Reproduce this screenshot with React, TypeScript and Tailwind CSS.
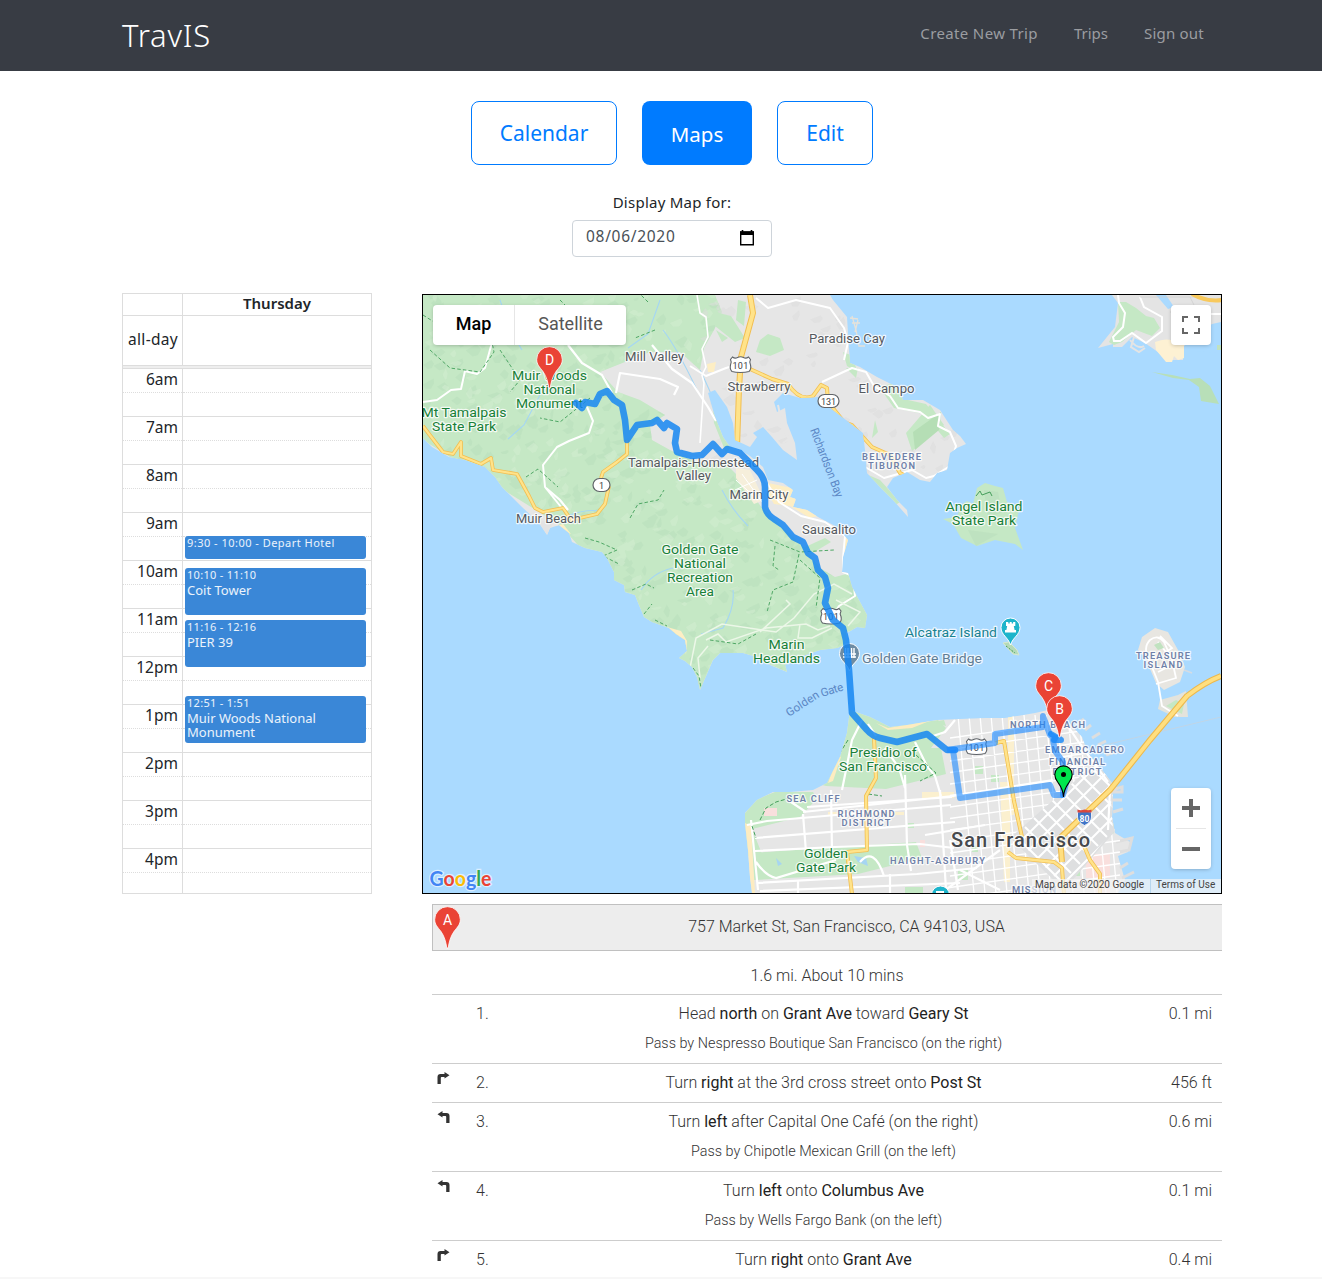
import React from "react";

const MAVEN = "font-['Noto_Sans',sans-serif]";

/* ---------- deterministic pseudo-random source for terrain shading ---------- */
function rng(seed: number) {
  let s = seed;
  return () => {
    s = (s * 16807) % 2147483647;
    return s / 2147483647;
  };
}

function terrain(seed: number, n: number, x0: number, y0: number, x1: number, y1: number) {
  const r = rng(seed);
  const out: string[] = [];
  for (let i = 0; i < n; i++) {
    const x = x0 + r() * (x1 - x0);
    const y = y0 + r() * (y1 - y0);
    const a = 3 + r() * 9;
    const b = 2 + r() * 5;
    const c = r() * 5;
    out.push(
      `M${x.toFixed(1)} ${y.toFixed(1)}l${a.toFixed(1)} ${(-b).toFixed(1)}l${c.toFixed(1)} ${(b * 0.8).toFixed(1)}l${(-a * 0.3).toFixed(1)} ${(b * 0.9).toFixed(1)}l${(-a * 0.5).toFixed(1)} ${(c * 0.3).toFixed(1)}z`
    );
  }
  return out.join("");
}

const MARIN =
  "M423 295L423 438L432 447L449 457L465 460L485 467L495 477L502 487L507 492L522 507L539 523L547 535L550 528L559 525L569 533L572 542L585 548L602 552L607 558L614 572L614 580L624 585L625 592L635 595L639 605L644 617L652 622L669 628L676 634L685 640L687 651L679 658L685 661L692 667L697 677L700 690L703 683L713 660L720 653L743 653L757 657L770 665L787 672L785 665L800 657L820 650L837 648L845 645L847 633L857 627L865 628L867 615L860 602L852 587L848 573L842 572L843 557L848 540L837 527L818 517L807 510L793 507L796 499L790 497L793 490L783 483L768 480L763 467L750 456L740 450L730 447L723 437L715 417L708 393L715 390L727 407L733 423L735 440L750 447L757 437L753 433L763 427L772 437L783 450L797 460L795 443L787 423L785 408L777 412L774 402L783 393L800 398L820 397L833 410L850 423L863 433L865 450L867 473L880 487L893 500L908 517L907 510L897 500L887 487L893 478L907 472L920 480L930 482L937 473L947 470L950 453L957 448L966 444L960 436L953 430L940 410L923 400L903 400L897 387L877 377L860 367L850 363L848 333L847 317L833 300L830 295Z";

const MARIN_GREEN =
  "M423 295L715 295L722 312L714 330L704 348L700 370L680 352L650 352L625 362L600 372L618 392L640 400L665 415L650 425L652 440L670 450L700 464L725 463L742 480L762 508L783 528L803 546L820 568L835 577L850 573L868 600L868 628L846 632L846 648L787 672L743 653L713 660L700 692L679 658L560 525L423 440Z";

const SF =
  "M850 710L847 733L840 757L827 783L813 790L790 792L773 792L757 800L745 813L745 823L748 850L750 877L752 893L1118 893L1125 880L1122 870L1118 856L1128 852L1130 842L1115 833L1112 817L1113 800L1112 783L1102 770L1088 753L1082 737L1065 718L1048 710L1035 713L1005 718L985 718L960 719L937 720L907 725L890 727L870 717Z";

const ROUTE =
  "M576 403L582 408L585 402L595 404L600 394L607 391L614 400L622 405L625 420L627 440L637 425L652 423L657 420L664 428L667 423L677 429L675 443L677 452L692 456L702 455L713 444L722 454L727 449L740 453L757 470Q765 478 765 487L765 507Q767 515 774 519L783 525L793 537L803 542L808 553L815 558L818 570L825 577L828 588L825 603L833 620L843 628L846 640L849 670L852 713L867 730Q872 736 880 738L897 742L927 734L947 750L955 750";

const ROUTE_LIGHT_1 = "M953 750L960 798L1050 785L1054 795L1063 795";
const ROUTE_LIGHT_2 =
  "M947 750L995 743L995 734L1043 727L1043 716L1050 735L1058 739M1052 735L1055 751L1063 762L1063 795L1067 780";

function Label({
  x,
  y,
  lines,
  size = 13.6,
  fill = "#55595e",
  lh = 14,
  weight = 400,
  spread = false,
  w,
}: {
  x: number;
  y: number;
  lines: string[];
  size?: number;
  fill?: string;
  lh?: number;
  weight?: number;
  spread?: boolean;
  w: number[];
}) {
  return (
    <g
      fontSize={size}
      fill={fill}
      fontWeight={weight}
      textAnchor="middle"
      stroke="#ffffff"
      strokeOpacity={0.8}
      strokeWidth={2.4}
      strokeLinejoin="round"
      paintOrder="stroke"
    >
      {lines.map((t, i) => (
        <text key={t} x={x} y={y + i * lh} textLength={w[i]} lengthAdjust={spread ? "spacing" : "spacingAndGlyphs"}>
          {t}
        </text>
      ))}
    </g>
  );
}

/* Spaced capitals used for neighbourhood names */
function District(props: { x: number; y: number; lines: string[]; lh?: number; w: number[] }) {
  return <Label size={9.3} lh={9} fill="#6f80a8" weight={600} spread {...props} />;
}

function Pin({ x, y, letter }: { x: number; y: number; letter: string }) {
  return (
    <g transform={`translate(${x} ${y})`}>
      <path
        d="M-0.700 0C-1.600 -6 -3 -11.500 -6.5 -16.500C-10 -21 -12.8 -23.500 -12.8 -28.500A12.8 12.8 0 0 1 12.8 -28.500C12.8 -23.500 10 -21 6.5 -16.500C3 -11.500 1.600 -6 0.700 0Z"
        fill="#ea4335"
        stroke="#fff"
        strokeWidth="0.800"
      />
      <text x="0" y="-23" textAnchor="middle" fontSize="14" fill="#fff">
        {letter}
      </text>
    </g>
  );
}

function Shield101({ x, y }: { x: number; y: number }) {
  return (
    <g transform={`translate(${x} ${y})`}>
      <path
        d="M-8 -8Q-5.500 -6 -3 -7.500Q0 -9 3 -7.500Q5.500 -6 8 -8L10 -5.500Q8.500 -3 10 0Q11 4 8.500 6.500Q5 7.500 0 7.500Q-5 7.500 -8.500 6.500Q-11 4 -10 0Q-8.500 -3 -10 -5.500Z"
        fill="#fff"
        stroke="#5f6368"
        strokeWidth="1.1"
      />
      <text y="3.500" textAnchor="middle" fontSize="9" fill="#3c4043" letterSpacing="0.2">
        101
      </text>
    </g>
  );
}

function MapCanvas() {
  const avenues: string[] = [];
  for (let i = 0; i < 14; i++) avenues.push(`M${958 + i * 11} 715L${974 + i * 11} 893`);
  for (let i = 0; i < 15; i++) avenues.push(`M950 ${738 + i * 11.5}L1120 ${714 + i * 11.5}`);
  const soma: string[] = [];
  for (let i = 0; i < 10; i++) soma.push(`M${1016 + i * 9} ${836 - i * 9}l46 46`);
  for (let i = 0; i < 6; i++) soma.push(`M${1020 + i * 8.5} ${842 + i * 8.5}l84 -84`);
  return (
    <svg viewBox="423 295 798 598" className="block h-[598px] w-[798px] font-[Roboto,sans-serif]">
      <defs>
        <clipPath id="marin"><path d={MARIN} /></clipPath>
        <clipPath id="marinGreen"><path d={MARIN_GREEN} /></clipPath>
        <clipPath id="sf"><path d={SF} /></clipPath>
        <clipPath id="soma"><path d="M1010 838L1108 752L1113 830L1064 890Z" /></clipPath>
      </defs>
      <rect x="423" y="295" width="798" height="598" fill="#aadaff" />

      {/* Marin */}
      <path d={MARIN} fill="#e6e6e6" />
      <g clipPath="url(#marin)">
        <path d={MARIN_GREEN} fill="#c5e8c5" />
        <g clipPath="url(#marinGreen)">
          <path d={terrain(17, 650, 423, 290, 870, 690)} fill="#b5dbba" opacity="0.42" />
          <path d={terrain(91, 380, 423, 290, 870, 690)} fill="#d3eed1" opacity="0.5" />
        </g>
        <path d={terrain(55, 90, 700, 295, 950, 480)} fill="#dcdcdc" opacity="0.5" />
        <path d="M715 312l16 4 14 22-10 4-20-16zM716 330l12 8-6 4zM760 340l8-6 12 4 4 12-14 6-14-4zM738 300l8 2-2 24-8-6zM843 352l10 4 4 16-10-6zM846 368l12 0-2 10zM880 388l14-6 14 18 18 4 24 30-6 4-20-24-30-6zM930 405l14 20-32 26-6-18zM875 420l3 12-6 6zM866 474l14 6 20 22-6 4zM712 395l12 18 12 28-10 12-12-30z" fill="#c5e8c5" />
        <path d="M913 432l28-20-2 18-24 20z" fill="#b5deb5" />
        <path d="M803 548l22-10 6 4-20 12z" fill="#c5e8c5" />
        <path d="M555 526l8-2 8 10-6-2zM768 483l24 5 4 14 22 14-8 2-20-12-16-2-6-10zM707 364l9-2-2 10-6 0zM845 535l4 6-3 14-3-6zM667 627l14 4 6 10-1 14-2-12z" fill="#fdeec4" />
        <path d="M736 468l14 2 14 30-10 4-18-26z" fill="#f6efdb" />
        <path d="M742 474l20 28M736 480l22 20M735 490l22-10" stroke="#fff" strokeWidth="1" />
        <path d="M538 522l16-2-6 16z" fill="#e3e3e3" />
        {/* creeks */}
        <path d="M641 590q12-18 32-22M733 590q2 18-10 38l-22 6M722 490q10 20 26 36M663 330q14 18 34 60M540 395l-16 30-16 14M500 300l10 30 12 20M700 370q10 20 26 60M660 300l-12 34-20 14M570 515q16-6 30-4" fill="none" stroke="#a4d6f5" strokeWidth="1.1" />
        {/* minor roads */}
        <g fill="none" stroke="#fff" strokeWidth="1.6" strokeLinejoin="round">
          <path d="M697 295l3 18 6 4 2 20-6 12 4 18-4 8 2 8-4 60" />
          <path d="M423 402l14-2 14-10 10-1 4-18 12 3 8-6 6-22 14-10M587 407l6 14-4 12-20 8-12 6-14 18 2 22 16 20" strokeWidth="2" />
          <path d="M568 345l14 18 20 12 10 18M616 393l4-20 40 6 18 8-4 8M652 345l20 24 20 14 16 24 8 14" strokeWidth="2.2" />
          <path d="M756 298l12 10 28-8 34 8 14 20 4 14-4 18M690 366l16 10 20-8 14-4M822 382l30-14 14 4 8 14 16 10 8 12 22 4 8 6 12-4-2 12 12 6 6 14-6 20-16 10-8 2-14-8-28 8-24-14-2-14" strokeWidth="2" />
          <path d="M765 480l14 22 22 14 24 6 20 14-2 22 0 14 10 4 2 20-16 10-8 12" strokeWidth="2" />
        </g>
        <path d="M690 668l6-30 26-14 54 8 18-14 20-24 20-10 18 10M706 640l12-6 8 8 40-14 40-4 12 6 12-4M760 632l30-28-4-4M836 600l24 12-12 14M700 678l-2-20 10-12M800 624l-2 14 14 0 20-10" fill="none" stroke="#ecf7e8" strokeWidth="1.500" />
        {/* trails */}
        <path d="M770 540l30 12 34-2M775 546l-2 20 6 4M799 554l-6 28-20 8-6 22M800 560l20 18-4 30M430 350l20 18 30 4 14-20-6-30 30-14M500 350l20 30-10 12M423 315l22 14 40 8M560 300l14 14-6 30M590 398l-30 24-20-4M648 302l-8-8M710 640l28 4 18-10M585 538l14 4 18 8-14 6 16 8M632 590l14-6 8 4M644 614l8-10M655 620l12 6M630 518l8-14 20-4 6-10M526 477l12-8 20 18M693 668l6 8 2 12M655 330l-20 8M510 500l12 14" fill="none" stroke="#4fa765" strokeWidth="1" strokeDasharray="3.500 2.200" />
        {/* highway 1 */}
        {["#f2bf52", "#ffe38a"].map((c, i) => (
          <path key={c} d="M423 426l6 8 14 18 10 2 8-12 0 14 20 8 10-6 2 12 24 4 12 22 6 12 8 4 20-4 8 12 26-6 8-10 4-18 M601 478l2-6 14-10 10-8 0-14" fill="none" stroke={c} strokeWidth={i ? 2.2 : 3.8} strokeLinejoin="round" />
        ))}
        <path d="M546 488l14 12 8 10" fill="none" stroke="#fff" strokeWidth="2.200" />
        {["#f2bf52", "#ffe38a"].map((c, i) => (
          <g key={c} fill="none" stroke={c} strokeLinejoin="round">
            <path d="M750 295l3 18-12 44-2 32-2 58" strokeWidth={i ? 4 : 6} />
            <path d="M750 369l22 10 16 5q12 18 25 12l8-11 6 3 1 14 16 20 8 3 20 22 18 8 10 18 18 9" strokeWidth={i ? 2.4 : 4} />
          </g>
        ))}
      </g>
      <path d="M757 420l6-8 6 2M778 405l5 24 6 10-6 4" fill="none" stroke="#e6e6e6" strokeWidth="2" />
      <path d="M850 318l8 1M852 323l8 0M852 316l4 14 3 16 6 0M858 320l-3 12" fill="none" stroke="#e6e2da" strokeWidth="1.300" />

      {/* Angel Island, Alcatraz */}
      <path d="M943 519l14-2 4-12 6-4 6 3 4-16 8-5 10 3 8 2 4 14 12 8-4 18 8 22-8-6-20-4-18 6-16-8-8-14z" fill="#c5e8c5" />
      <path d="M984 490l14 2 4 20-14 6zM968 530l30 4-22 12z" fill="#b9debd" opacity=".6" />
      <path d="M976 496l4-5 2 4 8-3 2 4" fill="none" stroke="#459e5b" strokeWidth="1" />
      <path d="M1003 643l6-1 8 8 2 5-6-1z" fill="#b4dab8" stroke="#d8e8cf" strokeWidth="1" />
      <path d="M1006 646l9 7" stroke="#459e5b" strokeWidth="1" strokeDasharray="2 1.500" />

      {/* Richmond shore */}
      <path d="M1112 295l6 8-3 24-17 21 15-4v3h9l10-10 13 6 10 7 13 10h15l1-14 28-22 9-2v-27z" fill="#e4e4e4" />
      <path d="M1184 350l18-22 10-3 9-2v30z" fill="#aadaff" />
      <path d="M1118 302l8 0 10 6 10 8 8 2 6 10-8 8-16-6-14 12-8 3-5-3 10-20z" fill="#c5e8c5" />
      <path d="M1155 342q14-6 24 2l5 0 0 14-6 2-4-4-2 6h-6l-10-12z" fill="#fdf1d3" />
      <path d="M1130 340q8 10 14 6M1134 337l-3 10 8 5 6-4" fill="none" stroke="#e4e4e4" strokeWidth="2" />
      <path d="M1118 295l1 8 6 10-2 14-10 10 1 4 6 0 12-8 14 10 16-12 0-14-18-10-4-10" fill="none" stroke="#fff" strokeWidth="2" />
      <path d="M1156 295l12 14 6-2-8-12zM1164 295l2 6" fill="#aadaff" />
      <path d="M1140 297h60M1170 312h40M1190 297l10 20" stroke="#cfcfcf" strokeWidth=".8" />
      <path d="M1192 294q14 8 30 6" fill="none" stroke="#f8c95c" strokeWidth="4" />
      <path d="M1207 314h14" stroke="#fff" strokeWidth="2" />
      <path d="M1217 345h4v5h-4z" fill="#c0e2bf" />
      <path d="M1152 372l20 3 18 4 10-1 10 8 9 18-18-3-2-14-10-7-16-2-14-4z" fill="#b8dfb8" />

      {/* Treasure Island, Yerba Buena */}
      <path d="M1142 637l13-9 13 4 10 18 7 17-5 15-16 8-8-7-11-26-7-7z" fill="#e8e6e1" />
      <path d="M1160 700l18-5 8-4 2 26h-13l-17-8z" fill="#e3e3dc" />
      <path d="M1166 706l10-6 8 4-2 10z" fill="#c5e8c5" />
      <path d="M1150 640q-8 8 0 22l8 20 4 24 16 10M1150 640q8-6 14 2l8 18 4 18-20 6M1160 636l12 12-6 4-8-10M1158 672l20-10" fill="none" stroke="#fff" strokeWidth="1.800" />
      <path d="M1154 645l6-3 4 6-6 2z" fill="#c0e2bf" />
      <path d="M1184 670l8 3" stroke="#d4dce4" strokeWidth="1.500" />

      {/* San Francisco */}
      <path d={SF} fill="#e6e6e6" />
      <path d="M1106 755l8-3M1098 745l8-4M1092 738l8-5M1085 730l6-5M1078 724l6-5M1112 790l10-3v5h-10M1112 800h10M1113 812l10-3M1116 842l16-4-3 12-10 2M1120 868l8-5M1122 878l12-6" fill="none" stroke="#dedede" strokeWidth="3" />
      <g clipPath="url(#sf)">
        <path d="M850 710l20 6 20 11 48-7 8 8-15 20 10 0 5 26-60 15-60-3-30-8z" fill="#c5e8c5" />
        <path d="M745 813l12-14 18-7h38l4 6-12 14-5 5-48 12 12 30-20-4z" fill="#c5e8c5" />
        <path d="M752 853l164-11 6 16-64 16-104 6z" fill="#c5e8c5" />
        <path d="M745 823l6 3 4 67h-12zM828 783l10-28 3 2-8 24zM876 723l12 5 24-4 20-4-20 8-24 2z" fill="#fdecc1" />
        <path d="M764 808h13v8h-13zM920 840h5v7h-5zM1086 854h24v24h-24zM1094 880h16v13h-16z" fill="#f9dfdd" />
        <path d="M975 766h8v8h-8zM991 775h8v7h-8zM908 823h6v5h-6zM972 846h6v6h-6zM905 887h18v6h-18zM958 870h10v10h-10zM1070 868h10v8h-10z" fill="#c5e8c5" />
        <path d="M1105 825l10-2-1 10-8 4zM932 722l12-2 2 6z" fill="#c5e8c5" />
        <path d="M828 812h76v3h-76zM922 792h32v6h-32zM1000 782h10v100h-6zM1008 715h6v100h-6z" fill="#fbf0cf" />
        <path d="M776 858l6 6-4 2zM854 856l12 2 2 8-10-4z" fill="#a6d5f2" />
        <path d="M1088 850l18-16 4 2-20 17z" fill="#a6d5f2" />
        <g fill="none" stroke="#fff">
          <path d={avenues.join("")} strokeWidth="1.300" />
          <path d="M1010 838L1108 752L1116 830L1064 890Z" fill="#dedfe0" stroke="none" />
          <g clipPath="url(#soma)"><path d={soma.join("")} strokeWidth="2" /></g>
          <path d="M747 825l20-4 184-16M755 838l200-16M755 851l80-4 85-3 34 4M803 812l150-16 100-16M807 807l145-10M757 883l160-9 60-6M760 891l200-8" strokeWidth="2.200" />
          <path d="M803 814l3 38M831 790l1 62M751 820l7 70M905 775l2 70 4 26M940 790l6 100M890 874v20M798 880v14M860 862q14-16 24 14M756 862q10 14 20 16l60-18M788 800l18 12M862 720l-10 20-10 50M868 724l8 12M915 742l12 24 8 10 6 20M885 748l14 20 6 20M955 720l-10 12-12 4M1000 850l-60 44M950 840l8 50M925 835l60-10M960 870l40 20M1060 714l20 30 28 38M1110 790l-2 40" strokeWidth="2.200" />
        </g>
        <path d="M760 820l6-12 10-6 14-4M752 826l4 12M848 740l-10 16M916 755l20 18-16 8M868 794l14 2" fill="none" stroke="#469f5c" strokeWidth="1" strokeDasharray="4 2" />
        {["#f2bf52", "#ffe38a"].map((c, i) => (
          <g key={c} fill="none" stroke={c} strokeWidth={i ? 2.4 : 4} strokeLinejoin="round">
            <path d="M874 738l2 40-10 18 1 54-20 2 5 42" />
            <path d="M996 743l8-2 10 60 8 36M1008 852l8 6 38 4 8 6 2 28M1084 846l6 14 10 14 0 20" />
          </g>
        ))}
      </g>
      <path d="M1105 745L1221 717" stroke="#c0d5e6" strokeWidth="1" />
      {["#edb94d", "#ffdf80"].map((c, i) => (
        <path key={c} d="M1221 676q-16 6-34 20L1150 740L1110 790L1060 838L1062 862" fill="none" stroke={c} strokeWidth={i ? 3.8 : 6} />
      ))}

      {/* place labels */}
      <Label x={654.5} y={361} lines={["Mill Valley"]} w={[59]} />
      <Label x={847} y={343} lines={["Paradise Cay"]} w={[76]} />
      <Label x={759} y={391} lines={["Strawberry"]} w={[63]} />
      <Label x={886.5} y={393} lines={["El Campo"]} w={[56]} />
      <Label x={693.5} y={467} lines={["Tamalpais-Homestead", "Valley"]} lh={13} w={[131, 35]} />
      <Label x={759} y={499} lines={["Marin City"]} w={[59]} />
      <Label x={548.5} y={523} lines={["Muir Beach"]} w={[65]} />
      <Label x={829} y={534} lines={["Sausalito"]} w={[54]} />
      <Label x={549.5} y={380} lines={["Muir Woods", "National", "Monument"]} w={[75, 52, 67]} fill="#188038" />
      <Label x={464} y={417} lines={["Mt Tamalpais", "State Park"]} w={[85, 64]} fill="#188038" />
      <Label x={700} y={554} lines={["Golden Gate", "National", "Recreation", "Area"]} w={[77, 52, 66, 28]} fill="#188038" />
      <Label x={786.5} y={649} lines={["Marin", "Headlands"]} w={[36, 67]} fill="#188038" />
      <Label x={984} y={511} lines={["Angel Island", "State Park"]} w={[77, 64]} fill="#188038" />
      <Label x={883} y={757} lines={["Presidio of", "San Francisco"]} w={[67, 88]} fill="#188038" />
      <Label x={826} y={858} lines={["Golden", "Gate Park"]} w={[44, 60]} fill="#188038" />
      <Label x={951} y={637} lines={["Alcatraz Island"]} w={[92]} fill="#188291" />
      <Label x={922} y={663} lines={["Golden Gate Bridge"]} w={[120]} fill="#5f7d95" />
      <District x={891.5} y={460} lines={["BELVEDERE", "TIBURON"]} w={[59, 47]} />
      <District x={1163} y={659} lines={["TREASURE", "ISLAND"]} w={[54, 39]} />
      <District x={813} y={802} lines={["SEA CLIFF"]} w={[53]} />
      <District x={866} y={817} lines={["RICHMOND", "DISTRICT"]} w={[57, 49]} />
      <District x={937.5} y={864} lines={["HAIGHT-ASHBURY"]} w={[95]} />
      <District x={1047.5} y={728} lines={["NORTH BEACH"]} w={[75]} />
      <District x={1084.5} y={753} lines={["EMBARCADERO"]} w={[79]} />
      <District x={1077} y={765} lines={["FINANCIAL", "DISTRICT"]} lh={10} w={[56, 49]} />
      <District x={1034} y={893} lines={["MISSION"]} w={[44]} />
      <Label x={1020.5} y={847} lines={["San Francisco"]} size={20} w={[139]} fill="#46494d" weight={500} spread />
      <text transform="translate(810 430) rotate(69)" fontSize="12" textLength="73" lengthAdjust="spacingAndGlyphs" fill="#5b87c5">Richardson Bay</text>
      <text transform="translate(789 717) rotate(-33)" fontSize="11.500" textLength="37" fill="#5b87c5">Golden</text>
      <text transform="translate(822 697) rotate(-17)" fontSize="11.500" textLength="23" fill="#5b87c5">Gate</text>

      {/* highway shields */}
      <Shield101 x={740.5} y={365} />
      <Shield101 x={831} y={616.5} />
      <Shield101 x={976.5} y={747} />
      <rect x="818" y="394.500" width="21" height="13" rx="6.500" fill="#fff" stroke="#5f6368" strokeWidth="1.200" />
      <text x="828.500" y="404.500" textAnchor="middle" fontSize="9" fill="#3c4043">131</text>
      <rect x="593" y="478.500" width="17" height="13" rx="6.500" fill="#fff" stroke="#5f6368" strokeWidth="1.200" />
      <text x="601.500" y="488.500" textAnchor="middle" fontSize="9" fill="#3c4043">1</text>
      <path d="M1077.500 812q7-2 14 0v5q0 5-7 8.500q-7-3.500-7-8.500z" fill="#3f74c6" stroke="#fff" strokeWidth=".8" />
      <path d="M1077.500 809.500q3 1.500 7 0q4 1.500 7 0v3h-14z" fill="#d9473d" />
      <text x="1084.500" y="821.500" textAnchor="middle" fontSize="8.500" fontWeight="700" fill="#fff">80</text>

      {/* landmark pins */}
      <path d="M1010.500 645C1008 637 1001 635 1001 627.500A9.500 9.500 0 0 1 1020 627.500C1020 635 1013 637 1010.500 645Z" fill="#1db4cb" stroke="#fff" strokeWidth="1" />
      <path d="M1006 622h2.300v1.500h1.400V622h2v1.500h1.400V622h2.200v4h-1.500l.8 4h1.400v2.500h-11V630h1.400l.8-4H1006z" fill="#fff" />
      <path d="M849.500 671C847 663 839.500 661 839.500 653.500A9.800 9.800 0 0 1 859.500 653.500C859.500 661 852 663 849.500 671Z" fill="#6e8ca3" stroke="#fff" strokeWidth="1" />
      <path d="M843 654h13M845.500 648v10M848 648v10M851.500 648v10M854 648v10M843 657h13" stroke="#fff" strokeWidth="1.400" />
      <circle cx="940.500" cy="895" r="9" fill="#1db4cb" stroke="#fff" />
      <path d="M936 891h8v2h-8z" fill="#fff" />

      {/* route */}
      <path d={ROUTE} fill="none" stroke="#1486f2" strokeOpacity=".84" strokeWidth="6.600" strokeLinejoin="round" strokeLinecap="round" />
      <path d={ROUTE_LIGHT_1} fill="none" stroke="#1a88ff" strokeOpacity=".6" strokeWidth="6" strokeLinejoin="round" />
      <path d={ROUTE_LIGHT_2} fill="none" stroke="#1a88ff" strokeOpacity=".62" strokeWidth="6" strokeLinejoin="round" />
      <path d="M1051 734l9 5M1054 740h7" stroke="#1486f7" strokeWidth="6" strokeLinecap="round" strokeOpacity=".8" />

      <Pin x={549.5} y={388} letter="D" />
      <Pin x={1048.5} y={714} letter="C" />
      <Pin x={1059.5} y={737} letter="B" />
      <path d="M1063.500 797C1063 789 1060.500 786 1058 782.500C1056 780 1054.800 777.500 1054.800 774.500A8.700 8.700 0 0 1 1072.200 774.500C1072.200 777.500 1071 780 1069 782.500C1066.500 786 1064 789 1063.500 797Z" fill="#00e64d" stroke="#000" strokeWidth="1.100" />
      <circle cx="1063.500" cy="774.500" r="2.500" fill="#000" />
    </svg>
  );
}

function MapPanel() {
  return (
    <div className="relative h-[600px] w-[800px] overflow-hidden border border-black font-[Roboto,sans-serif]">
      <MapCanvas />
      <div className="absolute left-[10px] top-[10px] flex h-10 rounded-sm bg-white text-[18px] leading-[38px] shadow-[0_1px_4px_-1px_rgba(0,0,0,0.3)]">
        <div className="w-[82px] border-r border-[#e6e6e6] text-center font-medium text-black">Map</div>
        <div className="w-[111px] text-center text-[#565656]">Satellite</div>
      </div>
      <div className="absolute right-[10px] top-[10px] flex size-10 items-center justify-center rounded-sm bg-white shadow-[0_1px_4px_-1px_rgba(0,0,0,0.3)]">
        <svg viewBox="0 0 18 18" className="size-[18px]" fill="#666">
          <path d="M0 0v6h2V2h4V0zM18 0h-6v2h4v4h2zM16 16h-4v2h6v-6h-2zM2 12H0v6h6v-2H2z" />
        </svg>
      </div>
      <div className="absolute bottom-[24px] right-[10px] flex h-[81px] w-10 flex-col items-center rounded-sm bg-white shadow-[0_1px_4px_-1px_rgba(0,0,0,0.3)]">
        <div className="flex h-10 items-center">
          <svg viewBox="0 0 18 18" className="size-[18px]" fill="#666"><path d="M7 0h4v7h7v4h-7v7H7v-7H0V7h7z" /></svg>
        </div>
        <div className="h-px w-[30px] bg-[#e6e6e6]" />
        <div className="flex h-10 items-center">
          <svg viewBox="0 0 18 18" className="size-[18px]" fill="#666"><path d="M0 7h18v4H0z" /></svg>
        </div>
      </div>
      <div className="absolute bottom-0 left-[6px]">
        <svg viewBox="0 0 66 28" className="h-[28px] w-[66px] font-[Lato,sans-serif]">
          <text x="0.500" y="20.500" fontSize="20" textLength="62" lengthAdjust="spacingAndGlyphs" stroke="#fff" strokeWidth="2.500" strokeOpacity=".6" paintOrder="stroke" fontWeight="700">
            <tspan fill="#4285f4">G</tspan><tspan fill="#ea4335">o</tspan><tspan fill="#fbbc04">o</tspan><tspan fill="#4285f4">g</tspan><tspan fill="#34a853">l</tspan><tspan fill="#ea4335">e</tspan>
          </text>
        </svg>
      </div>
      <div className="absolute bottom-0 right-0 flex h-[14px] items-center bg-[#f5f5f5]/70 text-[10px] leading-[14px] text-[#444]">
        <span className="w-[119px] border-r border-[#b7d6ee] pb-[2px] pr-[6px] text-right">Map data ©2020 Google</span>
        <span className="w-[70px] whitespace-nowrap pb-[2px] pl-[5px]">Terms of Use</span>
      </div>
    </div>
  );
}

const HOURS = ["6am", "7am", "8am", "9am", "10am", "11am", "12pm", "1pm", "2pm", "3pm", "4pm"];

function Calendar() {
  return (
    <div className={`h-[601px] w-[250px] overflow-hidden border border-[#ddd] text-[15.500px] text-[#212529] ${MAVEN}`}>
      <div className="flex h-[22px] border-b border-[#ddd]">
        <div className="w-[60px] border-r border-[#ddd]" />
        <div className="flex-1 text-center text-[15px] font-semibold leading-[19px]">Thursday</div>
      </div>
      <div className="flex h-[50px] border-b border-[#ddd]">
        <div className="w-[60px] whitespace-nowrap border-r border-[#ddd] pr-1 text-right leading-[47px] tracking-[0.300px]">all-day</div>
      </div>
      <div className="h-[2px] bg-[#eee]" />
      <div className="relative">
        {HOURS.map((h) => (
          <div key={h} className="flex h-12 border-t border-[#ddd]">
            <div className="w-[60px] border-r border-[#ddd]">
              <div className="h-6 border-b border-dotted border-[#ddd] pr-1 text-right leading-[21px]">{h}</div>
            </div>
            <div className="flex-1">
              <div className="h-6 border-b border-dotted border-[#ddd]" />
            </div>
          </div>
        ))}
        <div className="absolute left-[62px] top-[168px] h-[23px] w-[181px] rounded-[3px] bg-[#3a87d7] px-[2px] text-[11px] leading-[14px] tracking-[0.480px] text-white/90">
          9:30 - 10:00 - Depart Hotel
        </div>
        <Event className="top-[200px]" time="10:10 - 11:10" title="Coit Tower" />
        <Event className="top-[252px]" time="11:16 - 12:16" title="PIER 39" />
        <Event className="top-[328px]" time="12:51 - 1:51" title="Muir Woods National Monument" />
      </div>
    </div>
  );
}

function Event({ className, time, title }: { className: string; time: string; title: string }) {
  return (
    <div className={`absolute left-[62px] h-[47px] w-[181px] rounded-[3px] bg-[#3a87d7] px-[2px] text-white/90 ${className}`}>
      <div className="h-[15px] text-[11px] leading-[14px] tracking-[0.300px]">{time}</div>
      <div className="w-[150px] text-[13px] leading-[14px]">{title}</div>
    </div>
  );
}

function TurnIcon({ left = false }: { left?: boolean }) {
  return (
    <svg viewBox="0 0 13 12" className={left ? "h-3 w-[13px] -scale-x-100" : "h-3 w-[13px]"} fill="#333">
      <path d="M0.500 12V5Q.5 2 3.500 2H7.500V0L12.500 3.300L7.500 6.600V5H4.500Q3.800 5 3.800 6V12Z" />
    </svg>
  );
}

type Step = { n: number; turn?: "left" | "right"; text: React.ReactNode; note?: string; dist: string };
const B = ({ children }: { children: React.ReactNode }) => <b className="font-normal text-[#222]">{children}</b>;

const STEPS: Step[] = [
  { n: 1, text: <>Head <B>north</B> on <B>Grant Ave</B> toward <B>Geary St</B></>, note: "Pass by Nespresso Boutique San Francisco (on the right)", dist: "0.1 mi" },
  { n: 2, turn: "right", text: <>Turn <B>right</B> at the 3rd cross street onto <B>Post St</B></>, dist: "456 ft" },
  { n: 3, turn: "left", text: <>Turn <B>left</B> after Capital One Café (on the right)</>, note: "Pass by Chipotle Mexican Grill (on the left)", dist: "0.6 mi" },
  { n: 4, turn: "left", text: <>Turn <B>left</B> onto <B>Columbus Ave</B></>, note: "Pass by Wells Fargo Bank (on the left)", dist: "0.1 mi" },
  { n: 5, turn: "right", text: <>Turn <B>right</B> onto <B>Grant Ave</B></>, dist: "0.4 mi" },
];

function Directions() {
  return (
    <div className="ml-[10px] mt-[10px] w-[790px] font-[Roboto,sans-serif] text-[16px] font-light text-[#333]">
      <div className="flex h-[47px] items-center border border-r-0 border-[#c0c0c0] bg-[#ededed]">
        <svg viewBox="-14.5 -42 28 44" className="h-11 w-7 shrink-0 font-normal">
          <Pin x={0} y={0} letter="A" />
        </svg>
        <div className="flex-1 pb-[2px] pl-[10px] text-center">757 Market St, San Francisco, CA 94103, USA</div>
      </div>
      <div className="h-[43px] pt-[13px] text-center leading-6">1.6 mi. About 10 mins</div>
      {STEPS.map((s) => (
        <div key={s.n} className={`flex border-t border-[#cdcdcd] pt-[7px] leading-6 ${s.note ? "h-[69px]" : "h-[39px]"}`}>
          <div className="w-[44px] pl-[4.500px] pt-px">{s.turn && <TurnIcon left={s.turn === "left"} />}</div>
          <div className="w-[16px]">{s.n}.</div>
          <div className="flex-1 text-center">
            <div className="pl-[3px]">{s.text}</div>
            {s.note && <div className="mt-[6px] pl-[3px] text-[14.400px] leading-6">{s.note}</div>}
          </div>
          <div className="w-[70px] pr-[10px] text-right">{s.dist}</div>
        </div>
      ))}
    </div>
  );
}

export default function App() {
  return (
    <div className={`relative h-[1279px] w-[1322px] overflow-hidden bg-white ${MAVEN}`}>
      <nav className="flex h-[71px] items-center justify-between bg-[#383c44] pl-[122px] pr-[118px]">
        <div className="pb-px text-[31px] font-light tracking-[0.800px] text-white">TravIS</div>
        <div className="flex gap-9 pb-1 text-[15px] text-[#9b9da1]">
          <span className="tracking-[0.360px]">Create New Trip</span>
          <span>Trips</span>
          <span className="tracking-[0.220px]">Sign out</span>
        </div>
      </nav>
      <main className="ml-[122px] w-[1100px]">
        <div className="flex justify-center gap-[25px] pt-[30px] text-[21px] text-[#007bff]">
          <button className="h-16 w-[146px] rounded-[8px] border border-[#007bff] pt-[2px]">Calendar</button>
          <button className="h-16 w-[110px] rounded-[8px] bg-[#007bff] pt-[2px] text-[20.500px] text-white">Maps</button>
          <button className="h-16 w-[96px] rounded-[8px] border border-[#007bff] pt-[2px]">Edit</button>
        </div>
        <div className="mt-[25px] flex flex-col items-center text-[15px] text-[#212529]">
          <label className="h-[30px] leading-6 tracking-[0.250px]">Display Map for:</label>
          <div className="flex h-[37px] w-[200px] items-center justify-between rounded border border-[#ced4da] pl-[13px] pr-[17px] text-[#495057]">
            <span className="pb-[4px] text-[15.500px] tracking-[0.700px]">08/06/2020</span>
            <svg viewBox="0 0 14 16" className="mb-[2px] h-4 w-[14px]" fill="none">
              <path d="M2.500 0v2M11.500 0v2" stroke="#000" strokeWidth="1.600" />
              <path d="M.7 2h12.600v12.800H.7z" stroke="#000" strokeWidth="1.400" />
              <path d="M0 1.500h14V5H0z" fill="#000" />
            </svg>
          </div>
        </div>
        <div className="mt-9 flex items-start gap-[50px]">
          <Calendar />
          <div className="mt-px">
            <MapPanel />
            <Directions />
          </div>
        </div>
      </main>
      <div className="absolute inset-x-0 bottom-0 h-[2px] bg-[#f7f7f7]" />
    </div>
  );
}
